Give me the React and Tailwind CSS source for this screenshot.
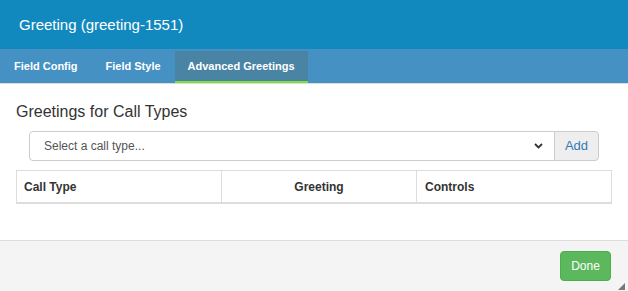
import React from 'react';

const tabs = ['Field Config', 'Field Style', 'Advanced Greetings'];

export default function App() {
  const active = 'Advanced Greetings';

  return (
    <div className="relative w-[628px] h-[291px] flex flex-col bg-white overflow-hidden font-['Liberation_Sans',Arial,sans-serif] text-[#333]">
      {/* Header */}
      <div className="h-[49px] shrink-0 bg-[#1289be] px-[19px] flex items-center text-white text-[15px] leading-none pb-px">
        Greeting (greeting-1551)
      </div>

      {/* Tabs */}
      <div className="h-[35px] shrink-0 bg-[#4591c4] border-b border-[#dcdcdc] flex items-end">
        {tabs.map(tab =>
          tab === active ? (
            <div
              key={tab}
              className="h-[32px] px-[13px] flex items-center bg-[#4a84a5] border-b-2 border-[#7fe03a] text-white text-[11px] font-bold"
            >
              {tab}
            </div>
          ) : (
            <div key={tab} className="h-[32px] px-[14px] flex items-center text-white text-[11px] font-bold pb-[2px]">
              {tab}
            </div>
          )
        )}
      </div>

      {/* Body */}
      <div className="flex-1 px-4">
        <h4 className="mt-[19px] text-[16px] leading-[18px] text-[#333]">Greetings for Call Types</h4>

        <div className="mt-[10px] mx-[13px] flex h-[30px]">
          <div className="flex-1 flex items-center justify-between border border-[#ccc] rounded-l-[4px] pl-[14px] pr-[11px] text-[12px] text-[#555]">
            <span>Select a call type...</span>
            <svg width="9" height="6" viewBox="0 0 9 6">
              <path d="M1 1 L4.5 4.5 L8 1" fill="none" stroke="#333" strokeWidth="1.8" />
            </svg>
          </div>
          <div className="w-[45px] -ml-px flex items-center justify-center bg-[#eee] border border-[#ccc] rounded-r-[4px] text-[13px] text-[#337ab7]">
            Add
          </div>
        </div>

        <div className="mt-[9px] border border-[#ddd] border-b-2 grid grid-cols-[204px_195px_1fr] h-[34px] text-[12px] font-bold text-[#333]">
          <div className="px-[7px] flex items-center">Call Type</div>
          <div className="border-l border-[#ddd] flex items-center justify-center">Greeting</div>
          <div className="border-l border-[#ddd] px-[8px] flex items-center">Controls</div>
        </div>
      </div>

      {/* Footer */}
      <div className="h-[51px] shrink-0 bg-[#f4f4f4] border-t border-[#ddd] flex items-center justify-end pr-[17px]">
        <button className="w-[51px] h-[30px] rounded-[4px] bg-[#5cb85c] border border-[#4cae4c] text-white text-[12px]">
          Done
        </button>
      </div>

      <svg className="absolute right-[3px] bottom-[1px]" width="7" height="7" viewBox="0 0 7 7">
        <path d="M7 0 L7 7 L0 7 Z" fill="#777" />
      </svg>
    </div>
  );
}
